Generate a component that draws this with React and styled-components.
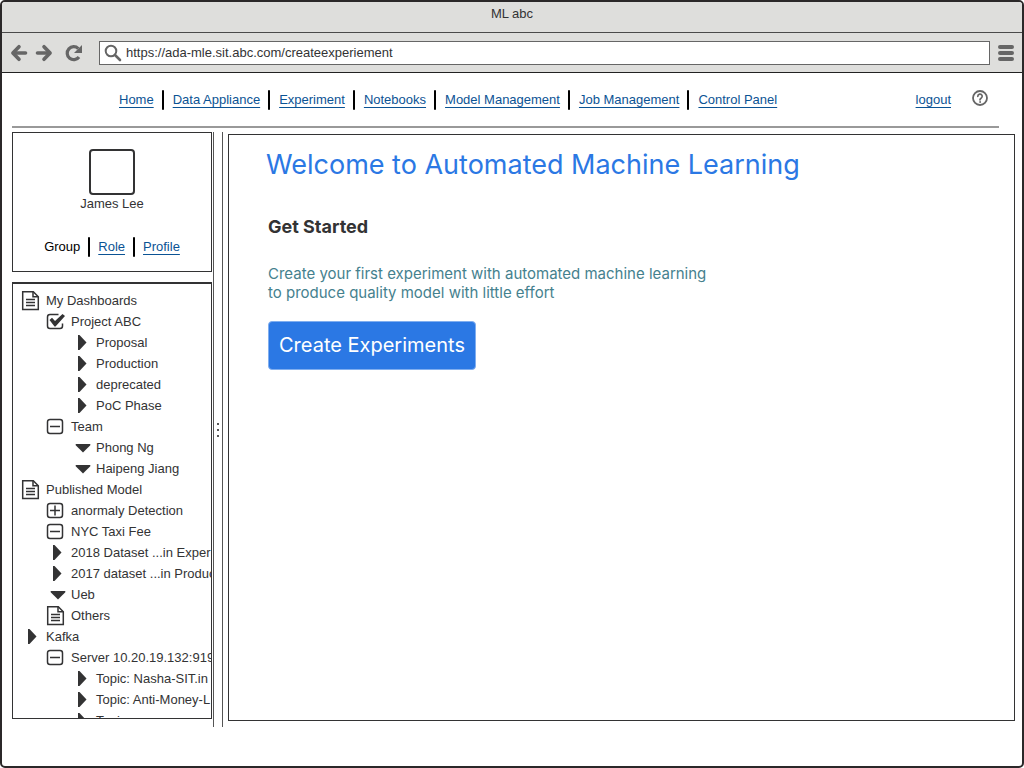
import React from "react";
import styled, { createGlobalStyle } from "styled-components";

const INK = "#333334";
const LINK = "#0b5394";
const BLUE = "#2b78e4";

const GlobalStyle = createGlobalStyle`
  * { box-sizing: border-box; }
  body { margin: 0; background: #fff; }
  body, button, input {
    font-family: "Liberation Sans", Arial, sans-serif;
    font-size: 13px;
    line-height: 20px;
    color: ${INK};
  }
`;

const Frame = styled.div`
  display: flex;
  flex-direction: column;
  height: 100vh;
  min-height: 480px;
  border: 2px solid #2b2829;
  border-radius: 5px;
  overflow: hidden;
`;

const TitleBar = styled.div`
  height: 31px;
  padding-top: 2px;
  text-align: center;
  background: #dededc;
  border-bottom: 1px solid #4a4a4a;
  flex: none;
`;

const Toolbar = styled.div`
  display: flex;
  align-items: center;
  height: 40px;
  padding: 0 8px;
  background: #dededc;
  border-bottom: 1px solid #222;
  flex: none;
`;

const IconButton = styled.button`
  display: block;
  flex: none;
  padding: 0;
  border: 0;
  background: none;
  cursor: pointer;
  margin-right: ${(p) => p.$after || 0}px;
  svg { display: block; }
`;

const AddressBar = styled.label`
  display: flex;
  align-items: center;
  flex: 1;
  height: 24px;
  margin-right: 8px;
  padding-left: 4px;
  gap: 4px;
  background: #fff;
  border: 1px solid #666;
  svg { flex: none; }
`;

const AddressInput = styled.input`
  flex: 1;
  min-width: 0;
  padding: 0;
  border: 0;
  outline: 0;
  background: transparent;
`;

const NavBar = styled.nav`
  display: flex;
  align-items: center;
  height: 55px;
  margin: 0 23px 0 10px;
  padding-left: 107px;
  border-bottom: 2px solid #999;
  flex: none;
`;

const Divider = styled.span`
  width: 2px;
  height: 20px;
  background: #000;
  border-radius: 1px;
`;

const LinkRow = styled.div`
  display: flex;
  align-items: center;
  gap: 8px;
  white-space: nowrap;
  ${Divider} { margin-right: ${(p) => (p.$roomy ? 1 : 0)}px; }
`;

const TextLink = styled.a`
  color: ${LINK};
  text-decoration: underline;
  text-decoration-thickness: 1px;
  text-underline-offset: 3px;
`;

const Account = styled.div`
  display: flex;
  align-items: flex-start;
  gap: 21px;
  margin-left: auto;
  padding-right: 11px;
`;

const Body = styled.div`
  display: flex;
  flex: 1;
  min-height: 0;
  padding: 4px 7px 39px 10px;
`;

const Sidebar = styled.aside`
  display: flex;
  flex-direction: column;
  width: 200px;
  flex: none;
  gap: 10px;
  padding-bottom: 8px;
`;

const Profile = styled.section`
  display: flex;
  flex-direction: column;
  align-items: center;
  height: 140px;
  padding-top: 16px;
  border: 1px solid ${INK};
  flex: none;
`;

const Avatar = styled.div`
  width: 46px;
  height: 46px;
  border: 2px solid ${INK};
  border-radius: 4px;
`;

const UserName = styled.span`
  line-height: 18px;
`;

const ProfileLinks = styled.div`
  margin-top: 24px;
`;

const Current = styled.span`
  color: #000;
`;

const Tree = styled.ul`
  flex: 1;
  min-height: 0;
  margin: 0;
  padding: 6px 0 0 8px;
  list-style: none;
  overflow: hidden;
  border: 1px solid ${INK};
  border-top-width: 2px;
`;

const TreeRow = styled.li`
  display: flex;
  align-items: center;
  height: 21px;
  gap: 5px;
  padding-left: ${(p) => p.$level * 25}px;
  white-space: nowrap;
`;

const CheckLabel = styled.label`
  display: flex;
  align-items: center;
  gap: 5px;
  position: relative;
`;

const CheckInput = styled.input`
  position: absolute;
  width: 20px;
  height: 20px;
  margin: 0;
  opacity: 0;
`;

const Splitter = styled.div`
  display: flex;
  align-items: center;
  justify-content: center;
  width: 10px;
  margin: 0 5px 0 1px;
  border: 1px solid #555;
  border-width: 0 1px;
  flex: none;
`;

const Main = styled.main`
  flex: 1;
  min-width: 0;
  margin: 2px 0 6px;
  padding: 14px 37px;
  border: 1px solid ${INK};
  font-family: Inter, "Liberation Sans", sans-serif;
`;

const Title = styled.h1`
  margin: 0;
  font-size: 27px;
  line-height: 32px;
  font-weight: 400;
  color: ${BLUE};
`;

const Subtitle = styled.h2`
  margin: 36px 0 0 2px;
  font-size: 18px;
  line-height: 20px;
  font-weight: 700;
`;

const Intro = styled.p`
  margin: 27px 0 0 2px;
  font-size: 15px;
  line-height: 19px;
  color: #45818e;
`;

const PrimaryButton = styled.button`
  display: block;
  height: 49px;
  margin: 19px 0 0 2px;
  padding: 0 10px 2px;
  border: 1px solid #80aeef;
  border-radius: 4px;
  background: ${BLUE};
  color: #fff;
  font-family: inherit;
  font-size: 20px;
  line-height: 24px;
  cursor: pointer;
`;

const ArrowIcon = ({ flip }) => (
  <svg width="18" height="18" viewBox="0 0 18 18" fill="none" stroke="#666" strokeWidth="3.600">
    <g transform={flip ? "translate(18 0) scale(-1 1)" : undefined}>
      <path d="M9 2.700 2.900 9l6.100 6.300" strokeLinecap="round" strokeLinejoin="round" />
      <path d="M4 9h11.500" strokeLinecap="round" />
    </g>
  </svg>
);

const ReloadIcon = () => (
  <svg width="18" height="18" viewBox="0 0 18 18">
    <path d="M14 13A6.500 6.500 0 1 1 13.300 4.600" fill="none" stroke="#666" strokeWidth="3.200" />
    <path d="M17 1v8H9z" fill="#666" />
  </svg>
);

const SearchIcon = () => (
  <svg width="18" height="18" viewBox="0 0 18 18" fill="none" stroke="#666">
    <circle cx="7" cy="7" r="5.300" strokeWidth="2" />
    <path d="M11 11l5 5" strokeWidth="2.600" strokeLinecap="round" />
  </svg>
);

const MenuIcon = () => (
  <svg width="16" height="18" viewBox="0 0 16 18" stroke="#666" strokeWidth="4" strokeLinecap="round">
    <path d="M2 3h12M2 9h12M2 15h12" />
  </svg>
);

const HelpIcon = () => (
  <svg width="16" height="16" viewBox="0 0 16 16" fill="none" stroke="#666" strokeLinecap="round">
    <circle cx="8" cy="8" r="7" strokeWidth="1.800" />
    <path d="M5.800 6.300a2.200 2.200 0 1 1 3.300 1.900C8.400 8.600 8 8.900 8 9.800" strokeWidth="1.700" />
    <circle cx="8" cy="12" r=".5" fill="#666" strokeWidth=".8" />
  </svg>
);

const BOX = "M4 3.400h10a2.500 2.500 0 0 1 2.500 2.500v9a2.500 2.500 0 0 1-2.500 2.500H4a2.500 2.500 0 0 1-2.500-2.500v-9A2.500 2.500 0 0 1 4 3.400z";

const glyphs = {
  doc: (
    <>
      <path d="M1.700 1.700h10.600l5 5v12.900H1.700z" />
      <path d="M12 1.700v5h5.300" />
      <path d="M5 9.500h9M5 12.500h9M5 15.500h9" />
    </>
  ),
  minus: <path d={BOX + "M4 10.400h10"} />,
  plus: <path d={BOX + "M4 10.400h10M9 5.400v10"} />,
  check: (
    <>
      <path d="M12.500 3.400H4A2.500 2.500 0 0 0 1.500 5.900v9A2.500 2.500 0 0 0 4 17.400h10a2.500 2.500 0 0 0 2.500-2.500v-2.500" />
      <path d="M3.500 9 6 6.800l3 3.200L16.500 3l2.500 2-9.500 10.500H8.500z" fill={INK} stroke="none" />
    </>
  ),
  right: <path d="M7 3h1.500l7 7.500-7 7.500H7z" fill={INK} stroke="none" />,
  down: <path d="M4.700 7h14.600v1.300L12 15.400 4.700 8.300z" fill={INK} stroke="none" />,
};

const Glyph = ({ kind }) => (
  <svg width="20" height="21" viewBox="0 0 20 21" fill="none" stroke={INK} strokeWidth="1.500">
    {glyphs[kind]}
  </svg>
);

const nav = ["Home", "Data Appliance", "Experiment", "Notebooks", "Model Management", "Job Management", "Control Panel"];

const tree = [
  [0, "doc", "My Dashboards"],
  [1, "check", "Project ABC"],
  [2, "right", "Proposal"],
  [2, "right", "Production"],
  [2, "right", "deprecated"],
  [2, "right", "PoC Phase"],
  [1, "minus", "Team"],
  [2, "down", "Phong Ng"],
  [2, "down", "Haipeng Jiang"],
  [0, "doc", "Published Model"],
  [1, "plus", "anormaly Detection"],
  [1, "minus", "NYC Taxi Fee"],
  [1, "right", "2018 Dataset ...in Exper"],
  [1, "right", "2017 dataset ...in Produc"],
  [1, "down", "Ueb"],
  [1, "doc", "Others"],
  [0, "right", "Kafka"],
  [1, "minus", "Server 10.20.19.132:9192"],
  [2, "right", "Topic: Nasha-SIT.in"],
  [2, "right", "Topic: Anti-Money-L"],
  [2, "right", "Topic:"],
];

function TreeItem({ level, kind, text }) {
  if (kind === "check") {
    return (
      <TreeRow $level={level}>
        <CheckLabel>
          <CheckInput type="checkbox" defaultChecked />
          <Glyph kind={kind} />
          {text}
        </CheckLabel>
      </TreeRow>
    );
  }
  return (
    <TreeRow $level={level}>
      {kind === "doc" ? (
        <Glyph kind={kind} />
      ) : (
        <IconButton type="button" aria-label={"Toggle " + text}>
          <Glyph kind={kind} />
        </IconButton>
      )}
      <span>{text}</span>
    </TreeRow>
  );
}

export default function App() {
  return (
    <>
      <GlobalStyle />
      <Frame>
        <TitleBar>ML abc</TitleBar>
        <Toolbar>
          <IconButton type="button" aria-label="Back" $after={7}><ArrowIcon /></IconButton>
          <IconButton type="button" aria-label="Forward" $after={12}><ArrowIcon flip /></IconButton>
          <IconButton type="button" aria-label="Reload" $after={16}><ReloadIcon /></IconButton>
          <AddressBar>
            <SearchIcon />
            <AddressInput type="text" aria-label="Address" defaultValue="https://ada-mle.sit.abc.com/createexperiement" />
          </AddressBar>
          <IconButton type="button" aria-label="Menu"><MenuIcon /></IconButton>
        </Toolbar>
        <NavBar>
          <LinkRow $roomy>
            {nav.map((label, i) => (
              <React.Fragment key={label}>
                {i > 0 && <Divider />}
                <TextLink href="#">{label}</TextLink>
              </React.Fragment>
            ))}
          </LinkRow>
          <Account>
            <TextLink href="#">logout</TextLink>
            <IconButton type="button" aria-label="Help"><HelpIcon /></IconButton>
          </Account>
        </NavBar>
        <Body>
          <Sidebar>
            <Profile>
              <Avatar />
              <UserName>James Lee</UserName>
              <ProfileLinks>
                <LinkRow>
                  <Current>Group</Current>
                  <Divider />
                  <TextLink href="#">Role</TextLink>
                  <Divider />
                  <TextLink href="#">Profile</TextLink>
                </LinkRow>
              </ProfileLinks>
            </Profile>
            <Tree>
              {tree.map(([level, kind, text]) => (
                <TreeItem key={text} level={level} kind={kind} text={text} />
              ))}
            </Tree>
          </Sidebar>
          <Splitter>
            <svg width="2" height="14" viewBox="0 0 2 14" fill="#555">
              <path d="M0 0h2v2H0zM0 6h2v2H0zM0 12h2v2H0z" />
            </svg>
          </Splitter>
          <Main>
            <Title>Welcome to Automated Machine Learning</Title>
            <Subtitle>Get Started</Subtitle>
            <Intro>
              Create your first experiment with automated machine learning
              <br />
              to produce quality model with little effort
            </Intro>
            <PrimaryButton type="button">Create Experiments</PrimaryButton>
          </Main>
        </Body>
      </Frame>
    </>
  );
}
